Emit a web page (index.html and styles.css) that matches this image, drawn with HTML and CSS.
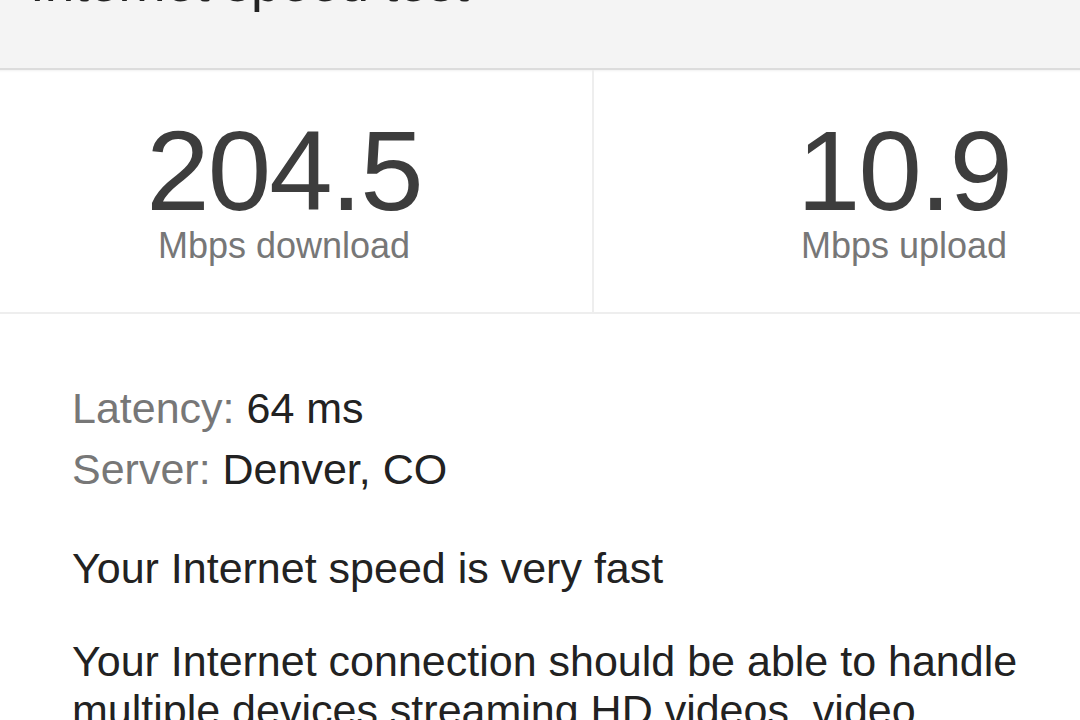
FILE: index.html
```html
<!DOCTYPE html>
<html lang="en">
<head>
    <meta charset="UTF-8">
    <meta name="viewport" content="width=device-width, initial-scale=1.0">
    <title>Internet speed test</title>
    <link rel="stylesheet" href="styles.css">
</head>
<body>
    <div class="card">
        <div class="card-header">
            <h1>Internet speed test</h1>
        </div>

        <div class="stats">
            <div class="stat">
                <div class="stat-value">204.5</div>
                <div class="stat-label">Mbps download</div>
            </div>
            <div class="stat">
                <div class="stat-value">10.9</div>
                <div class="stat-label">Mbps upload</div>
            </div>
        </div>

        <div class="card-body">
            <div class="details">
                <div><span class="key">Latency:</span> 64 ms</div>
                <div><span class="key">Server:</span> Denver, CO</div>
            </div>
            <p>Your Internet speed is very fast</p>
            <p>Your Internet connection should be able to handle multiple devices streaming HD videos, video conferencing, and gaming at the same time.</p>
        </div>
    </div>
</body>
</html>
```

FILE: styles.css
```css
/* Speed test result card */
html,
body {
    margin: 0;
    padding: 0;
    overflow: hidden;
    background: #fff;
}
body {
    font-family: "Liberation Sans", Arial, Helvetica, sans-serif;
    color: #222;
}
.card {
    width: 1240px;
    margin-left: -26px;
}
.card-header {
    display: flow-root;
    height: 68px;
    background-color: #f4f4f4;
    border-bottom: 2px solid #dcdcdc;
    box-shadow: 0 1px 2px rgba(0, 0, 0, 0.06);
}
h1 {
    margin: -44px 0 0 56px;
    font-size: 53px;
    line-height: 53px;
    font-weight: normal;
    color: #222;
}
.stats {
    display: grid;
    grid-template-columns: 620px 620px;
    border-bottom: 2px solid #eeeeee;
}
.stat {
    text-align: center;
    padding: 44px 0 48px;
}
.stat + .stat {
    border-left: 2px solid #eeeeee;
    margin-left: -2px;
}
.stat-value {
    font-size: 114px;
    line-height: 114px;
    letter-spacing: -2px;
    color: #3d3d3d;
}
.stat-label {
    font-size: 36px;
    line-height: 36px;
    color: #777;
}
.card-body {
    padding: 64px 98px 0;
    font-size: 43px;
}
.details {
    line-height: 61px;
}
.key {
    color: #777;
}
.card-body p {
    margin: 44px 0 0;
    line-height: 49px;
}
```
